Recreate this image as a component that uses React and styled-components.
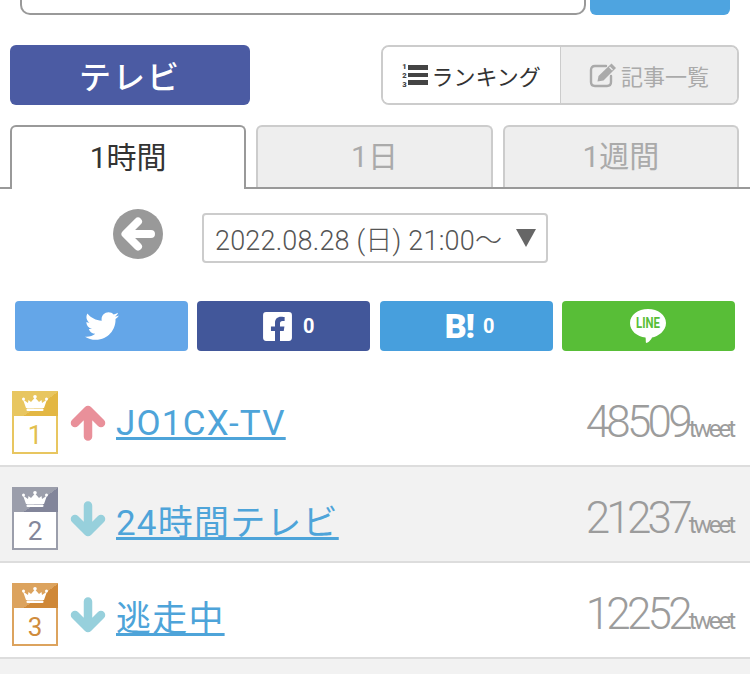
import React from 'react';
import styled, {createGlobalStyle} from 'styled-components';
import {FaTwitter, FaFacebookSquare} from 'react-icons/fa';

const GlobalStyle = createGlobalStyle`
  html, body {
    margin: 0;
    padding: 0;
    background: #fff;
    overflow: hidden;
  }
  body {
    font-family: Roboto, "Noto Sans CJK JP", sans-serif;
    color: #333;
  }
  * {
    box-sizing: border-box;
  }
`;

const rankColors = {
  1: {main: '#e8c660', dark: '#e3b743', num: '#e3c04e'},
  2: {main: '#9b9eab', dark: '#82859a', num: '#84879a'},
  3: {main: '#dca35e', dark: '#cf8838', num: '#d08c3c'},
};

const rows = [
  {rank: 1, up: true, title: 'JO1CX-TV', count: 48509},
  {rank: 2, up: false, title: '24時間テレビ', count: 21237},
  {rank: 3, up: false, title: '逃走中', count: 12252},
];

const Crown = () => (
  <svg width="26" height="16" viewBox="0 0 26 16" fill="#fff">
    <circle cx="13" cy="1.8" r="1.8" />
    <circle cx="1.5" cy="4" r="1.5" />
    <circle cx="24.5" cy="4" r="1.5" />
    <path d="M13 2.500 L17 7 L19.500 5 L20 8 L25 4.500 L22 13 L4 13 L1 4.500 L6 8 L6.500 5 L9 7 Z" />
    <rect x="4.500" y="13.400" width="17" height="2.600" rx="1" />
  </svg>
);

const RankArrow = ({up}) => (
  <svg width="36" height="36" viewBox="0 0 36 36" fill="none" stroke={up ? '#e9909a' : '#97d0dc'} strokeWidth="8.5" strokeLinecap="round" strokeLinejoin="round">
    {up ? (
      <path d="M18 31.5 V6 M5 18 L18 5 L31 18" />
    ) : (
      <path d="M18 4.5 V30 M5 18 L18 31 L31 18" />
    )}
  </svg>
);

const BackArrow = () => (
  <svg width="50" height="50" viewBox="0 0 50 50">
    <circle cx="25" cy="25" r="25" fill="#999" />
    <path d="M38 25 H14 M25 12.5 L12.5 25 L25 37.5" fill="none" stroke="#fff" strokeWidth="8" strokeLinecap="round" strokeLinejoin="round" />
  </svg>
);

const EditIcon = () => (
  <svg width="28" height="26" viewBox="0 0 28 26">
    <path d="M17 4 H6 Q2 4 2 8 V20 Q2 24 6 24 H18 Q22 24 22 20 V14" fill="none" stroke="#aaa" strokeWidth="2.4" strokeLinecap="round" />
    <path d="M22.5 1.5 L27 6 L14.5 18.5 L8.5 19.5 L9.5 14 Z" fill="#aaa" />
    <path d="M20.5 5 L23.5 8" stroke="#eee" strokeWidth="1.2" />
  </svg>
);

const RankingIcon = () => (
  <RankIconWrap>
    <RankNums>
      <span>1</span>
      <span>2</span>
      <span>3</span>
    </RankNums>
    <RankBars>
      <i />
      <i />
      <i />
    </RankBars>
  </RankIconWrap>
);

const LineIcon = () => (
  <svg width="38" height="36" viewBox="0 0 38 36">
    <path d="M19 1 C29 1 37 7 37 15 C37 23 29 28.500 23 29.500 C22 32 19 35 17 35 C16.500 33 17 31 16.500 29.500 C8 28.500 1 23 1 15 C1 7 9 1 19 1 Z" fill="#fff" />
    <text x="19" y="20" textAnchor="middle" fontFamily="Roboto, sans-serif" fontWeight="700" fontSize="14" textLength="24" lengthAdjust="spacingAndGlyphs" fill="#58be37">LINE</text>
  </svg>
);

export default function App() {
  return (
    <Page>
      <GlobalStyle />
      <SearchRow>
        <SearchBox />
        <SearchButton />
      </SearchRow>

      <HeadRow>
        <Category>テレビ</Category>
        <Toggle>
          <ToggleItem $active>
            <RankingIcon />
            ランキング
          </ToggleItem>
          <ToggleItem>
            <EditIcon />
            記事一覧
          </ToggleItem>
        </Toggle>
      </HeadRow>

      <Tabs>
        <Tab $active>1時間</Tab>
        <Tab>1日</Tab>
        <Tab>1週間</Tab>
      </Tabs>

      <DateRow>
        <BackArrow />
        <DateSelect>
          2022.08.28 (日) 21:00〜
          <Caret />
        </DateSelect>
      </DateRow>

      <ShareRow>
        <ShareButton $bg="#64a6e8"><FaTwitter size={34} /></ShareButton>
        <ShareButton $bg="#42579a" $shift={8}><FaFacebookSquare size={33} /><ShareCount>0</ShareCount></ShareButton>
        <ShareButton $bg="#479fdd" $shift={7}><Hatena>B!</Hatena><ShareCount>0</ShareCount></ShareButton>
        <ShareButton $bg="#58be37"><LineIcon /></ShareButton>
      </ShareRow>

      <List>
        {rows.map(row => (
          <Row key={row.rank} $even={row.rank % 2 === 0}>
            <Badge $rank={row.rank}>
              <BadgeTop $rank={row.rank}><Crown /></BadgeTop>
              <BadgeNum $rank={row.rank}>{row.rank}</BadgeNum>
            </Badge>
            <ArrowCell><RankArrow up={row.up} /></ArrowCell>
            <Title href="#">{row.title}</Title>
            <Count>{row.count}<small>tweet</small></Count>
          </Row>
        ))}
        <Row $even />
      </List>
    </Page>
  );
}

const Page = styled.div`
  width: 750px;
  height: 674px;
  overflow: hidden;
`;

const SearchRow = styled.div`
  display: flex;
  gap: 4px;
  padding-left: 20px;
  height: 15px;
`;

const SearchBox = styled.div`
  width: 566px;
  border: 2px solid #999;
  border-top: 0;
  border-radius: 0 0 10px 10px;
`;

const SearchButton = styled.div`
  width: 140px;
  background: #4ea4e0;
  border-radius: 0 0 6px 6px;
`;

const HeadRow = styled.div`
  display: flex;
  justify-content: space-between;
  padding: 30px 11px 0 10px;
`;

const Category = styled.div`
  width: 240px;
  height: 60px;
  background: #4b5ba3;
  border-radius: 6px;
  color: #fff;
  font-size: 32px;
  font-weight: 500;
  letter-spacing: 2px;
  display: flex;
  align-items: center;
  justify-content: center;
`;

const Toggle = styled.div`
  width: 358px;
  height: 60px;
  display: flex;
  border: 2px solid #ccc;
  border-radius: 8px;
  overflow: hidden;
`;

const ToggleItem = styled.div`
  flex: ${p => (p.$active ? '0 0 178px' : '1')};
  display: flex;
  align-items: center;
  justify-content: center;
  gap: 4px;
  font-size: 22px;
  background: ${p => (p.$active ? '#fff' : '#eee')};
  color: ${p => (p.$active ? '#333' : '#aaa')};
  border-right: ${p => (p.$active ? '1px solid #ccc' : '0')};
`;

const RankIconWrap = styled.span`
  display: flex;
  align-items: center;
  gap: 1px;
`;

const RankNums = styled.span`
  display: flex;
  flex-direction: column;
  font-size: 7.6px;
  font-weight: 900;
  line-height: 9px;
  color: #444;
`;

const RankBars = styled.span`
  display: flex;
  flex-direction: column;
  gap: 3px;
  i {
    display: block;
    width: 20px;
    height: 4.5px;
    background: #444;
  }
`;

const Tabs = styled.div`
  display: flex;
  gap: 10px;
  height: 64px;
  margin-top: 20px;
  padding: 0 11px 0 10px;
  border-bottom: 2px solid #999;
`;

const Tab = styled.div`
  flex: 1;
  height: ${p => (p.$active ? '64px' : '62px')};
  display: flex;
  align-items: center;
  justify-content: center;
  padding-bottom: 6px;
  font-size: 30px;
  position: relative;
  z-index: ${p => (p.$active ? 1 : 0)};
  background: ${p => (p.$active ? '#fff' : '#eee')};
  color: ${p => (p.$active ? '#333' : '#aaa')};
  border: 2px solid ${p => (p.$active ? '#999' : '#ccc')};
  border-bottom: 0;
  border-radius: 6px 6px 0 0;
`;

const DateRow = styled.div`
  display: flex;
  align-items: flex-start;
  gap: 39px;
  padding: 20px 0 0 113px;
`;

const DateSelect = styled.div`
  width: 346px;
  height: 50px;
  margin-top: 4px;
  display: flex;
  align-items: center;
  justify-content: space-between;
  padding: 0 10px 0 11px;
  border: 2px solid #ccc;
  border-radius: 4px;
  font-size: 27px;
  font-weight: 300;
  letter-spacing: 0.2px;
  color: #555;
  white-space: nowrap;
`;

const Caret = styled.span`
  width: 0;
  height: 0;
  border-left: 10px solid transparent;
  border-right: 10px solid transparent;
  border-top: 18px solid #666;
`;

const ShareRow = styled.div`
  display: grid;
  grid-template-columns: 173px 173px 173px 173px;
  column-gap: 9.3px;
  padding: 38px 0 0 15px;
`;

const ShareButton = styled.div`
  height: 50px;
  border-radius: 4px;
  background: ${p => p.$bg};
  color: #fff;
  display: flex;
  align-items: center;
  justify-content: center;
  gap: 9px;
  padding-left: ${p => p.$shift || 0}px;
`;

const ShareCount = styled.span`
  font-size: 20px;
  font-weight: 700;
`;

const Hatena = styled.span`
  font-family: Roboto, sans-serif;
  font-size: 34px;
  font-weight: 900;
  letter-spacing: -1px;
`;

const List = styled.div`
  margin-top: 20px;
`;

const Row = styled.div`
  height: 96px;
  display: flex;
  align-items: center;
  padding: 8px 15px 0 12px;
  background: ${p => (p.$even ? '#f2f2f2' : '#fff')};
  border-bottom: 2px solid #ddd;
`;

const Badge = styled.div`
  width: 46px;
  height: 63px;
  flex: none;
  display: flex;
  flex-direction: column;
  border: 2px solid ${p => rankColors[p.$rank].main};
  background: #fff;
`;

const BadgeTop = styled.div`
  height: 25px;
  flex: none;
  margin: -2px -2px 0;
  display: flex;
  align-items: center;
  justify-content: center;
  background: linear-gradient(145deg, ${p => rankColors[p.$rank].main} 58%, ${p => rankColors[p.$rank].dark} 58%);
`;

const BadgeNum = styled.div`
  flex: 1;
  display: flex;
  align-items: center;
  justify-content: center;
  padding-top: 2px;
  font-size: 26px;
  color: ${p => rankColors[p.$rank].num};
`;

const ArrowCell = styled.div`
  width: 36px;
  margin: 2px 0 0 12px;
  flex: none;
  display: flex;
`;

const Title = styled.a`
  margin: 2px 0 0 10px;
  font-size: 35px;
  letter-spacing: 1.2px;
  color: #4ea4d9;
  text-decoration: underline;
  text-underline-offset: 2px;
`;

const Count = styled.div`
  margin-left: auto;
  padding-right: 2px;
  font-size: 44px;
  font-weight: 350;
  letter-spacing: -3.8px;
  color: #9c9c9c;
  small {
    font-size: 24px;
    font-weight: 400;
    letter-spacing: -3px;
  }
`;
